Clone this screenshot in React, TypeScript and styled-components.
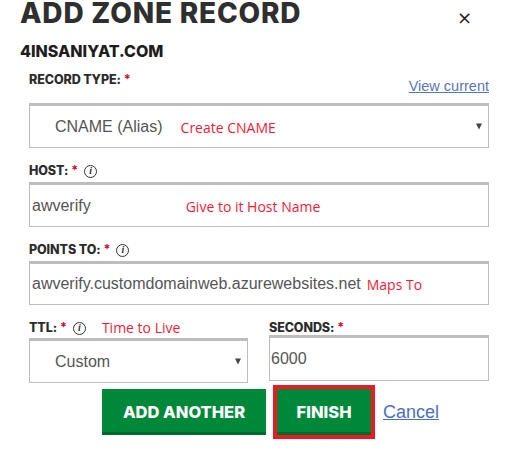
import React from "react";
import styled, { createGlobalStyle } from "styled-components";

const Global = createGlobalStyle`
  html, body { margin: 0; padding: 0; background: #fff; }
  body { width: 518px; height: 450px; overflow: hidden; }
`;

const Page = styled.div`
  position: relative;
  width: 518px;
  height: 450px;
  background: #fff;
`;

const Header = styled.div`
  display: flex;
  justify-content: space-between;
  align-items: flex-start;
  padding: 0 46px 0 20px;
`;

const Title = styled.h1`
  margin: 0;
  font-family: Inter, "DejaVu Sans", sans-serif;
  font-weight: 800;
  font-size: 28px;
  line-height: 27px;
  color: #2f2f2f;
  letter-spacing: 0.8px;
`;

const Close = styled.span`
  font-family: "DejaVu Sans", sans-serif;
  font-size: 18px;
  line-height: 18px;
  margin-top: 9px;
  color: #222;
`;

const Domain = styled.div`
  margin: 15px 0 0 20px;
  font-family: Inter, "DejaVu Sans", sans-serif;
  font-weight: 800;
  font-size: 16px;
  line-height: 18px;
  color: #1d1d1d;
`;

const Form = styled.div`
  padding: 0 29px;
`;

const LabelRow = styled.div<{ $mt: number; $gap?: number }>`
  display: flex;
  align-items: flex-end;
  justify-content: space-between;
  margin-top: ${(p) => p.$mt}px;
  margin-bottom: ${(p) => p.$gap ?? 5}px;
`;

const Label = styled.div`
  display: flex;
  align-items: center;
  gap: 4px;
  height: 16px;
  font-family: Inter, "DejaVu Sans", sans-serif;
  font-weight: 800;
  font-size: 12.5px;
  line-height: 16px;
  color: #2b2b2b;
  letter-spacing: -0.1px;
`;

const Star = styled.span`
  color: #c8102e;
  font-weight: 700;
  margin-left: -1px;
`;

const Info = styled.span`
  display: inline-flex;
  align-items: center;
  justify-content: center;
  box-sizing: border-box;
  width: 13px;
  height: 13px;
  border: 1.4px solid #333;
  border-radius: 50%;
  font-family: "Liberation Serif", serif;
  font-style: italic;
  font-weight: 700;
  font-size: 10px;
  line-height: 10px;
  color: #333;
  margin-left: 2px;
  letter-spacing: 0;
`;

const ViewLink = styled.a`
  font-family: "Liberation Sans", Arial, sans-serif;
  font-size: 14.5px;
  line-height: 16px;
  color: #5a77b5;
  text-decoration: underline;
  margin-bottom: -6px;
`;

const Box = styled.div<{ $h?: number }>`
  box-sizing: border-box;
  width: 100%;
  height: ${(p) => p.$h ?? 45}px;
  border: 1px solid #bdbdbd;
  border-top: 3px solid #bdbdbd;
  display: flex;
  align-items: center;
  position: relative;
  background: #fff;
`;

const Value = styled.span<{ $indent: number }>`
  padding-left: ${(p) => p.$indent}px;
  font-family: "Liberation Sans", Arial, sans-serif;
  font-size: 16px;
  color: #555;
  white-space: nowrap;
`;

const Note = styled.span<{ $ml: number; $dy?: number }>`
  margin-left: ${(p) => p.$ml}px;
  position: relative;
  top: ${(p) => p.$dy ?? 0}px;
  font-family: "Open Sans", "Noto Sans", sans-serif;
  font-weight: 400;
  font-size: 14px;
  letter-spacing: 0;
  color: #ee1c3a;
  white-space: nowrap;
`;

const Arrow = styled.span`
  position: absolute;
  right: 6px;
  top: 50%;
  transform: translateY(-60%);
  width: 0;
  height: 0;
  border-left: 3.5px solid transparent;
  border-right: 3.5px solid transparent;
  border-top: 6px solid #444;
`;

const Split = styled.div`
  display: flex;
  gap: 21px;
  margin-top: 15px;
`;

const Col = styled.div<{ $w: number }>`
  width: ${(p) => p.$w}px;
  display: flex;
  flex-direction: column;
`;

const Actions = styled.div`
  display: flex;
  align-items: center;
  margin: 2px 0 0 102px;
`;

const GreenButton = styled.button<{ $w: number }>`
  box-sizing: border-box;
  width: ${(p) => p.$w}px;
  height: 46px;
  border: none;
  border-bottom: 3px solid #00692c;
  background: #00883a;
  color: #fff;
  font-family: Inter, "DejaVu Sans", sans-serif;
  font-weight: 800;
  font-size: 16.5px;
  padding: 3px 0 0;
  cursor: pointer;
`;

const Highlight = styled.div`
  margin-left: 7px;
  border: 4px solid #e81c24;
  display: flex;
`;

const CancelLink = styled.a`
  margin-left: 8px;
  font-family: "Liberation Sans", Arial, sans-serif;
  font-size: 18px;
  color: #4a6fbf;
  text-decoration: underline;
`;

export default function App() {
  return (
    <Page>
      <Global />
      <Header>
        <Title>ADD ZONE RECORD</Title>
        <Close>×</Close>
      </Header>
      <Domain>4INSANIYAT.COM</Domain>
      <Form>
        <LabelRow $mt={12} $gap={15}>
          <Label>
            RECORD TYPE: <Star>*</Star>
          </Label>
          <ViewLink>View current</ViewLink>
        </LabelRow>
        <Box>
          <Value $indent={25}>CNAME (Alias)</Value>
          <Note $ml={18} $dy={1}>Create CNAME</Note>
          <Arrow />
        </Box>

        <LabelRow $mt={15} $gap={3}>
          <Label>
            HOST: <Star>*</Star>
            <Info>i</Info>
          </Label>
        </LabelRow>
        <Box>
          <Value $indent={2}>awverify</Value>
          <Note $ml={95} $dy={1}>Give to it Host Name</Note>
        </Box>

        <LabelRow $mt={15} $gap={3}>
          <Label>
            POINTS TO: <Star>*</Star>
            <Info>i</Info>
          </Label>
        </LabelRow>
        <Box $h={44}>
          <Value $indent={2}>awverify.customdomainweb.azurewebsites.net</Value>
          <Note $ml={6} $dy={0}>Maps To</Note>
        </Box>

        <Split>
          <Col $w={219}>
            <LabelRow $mt={0} $gap={2}>
              <Label>
                TTL: <Star>*</Star>
                <Info>i</Info>
                <Note $ml={12}>Time to Live</Note>
              </Label>
            </LabelRow>
            <Box>
              <Value $indent={25}>Custom</Value>
              <Arrow />
            </Box>
          </Col>
          <Col $w={220}>
            <LabelRow $mt={0} $gap={-1}>
              <Label>
                SECONDS: <Star>*</Star>
              </Label>
            </LabelRow>
            <Box $h={46}>
              <Value $indent={1}>6000</Value>
            </Box>
          </Col>
        </Split>
      </Form>
      <Actions>
        <GreenButton $w={164}>ADD ANOTHER</GreenButton>
        <Highlight>
          <GreenButton $w={94}>FINISH</GreenButton>
        </Highlight>
        <CancelLink>Cancel</CancelLink>
      </Actions>
    </Page>
  );
}
